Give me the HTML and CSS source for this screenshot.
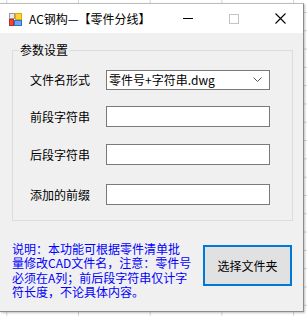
FILE: index.html
```html
<!DOCTYPE html>
<html>
<head>
    <title>AC钢构—【零件分线】</title>
    <meta charset="utf-8" />
    <link rel="stylesheet" href="styles.css">
</head>
<body>
    <div class="window">
        <div class="titlebar">
            <svg class="app-icon" width="13" height="13" viewBox="0 0 13 13">
                <rect x="0" y="0" width="6" height="6" fill="#9a9a9a" />
                <rect x="1" y="1" width="4" height="4" fill="#e9e9e9" />
                <rect x="6" y="0" width="7" height="7" fill="#e0a800" />
                <rect x="7" y="1" width="5" height="5" fill="#ffd23c" />
                <rect x="0" y="6" width="5" height="7" fill="#c8281e" />
                <rect x="1" y="7" width="3" height="5" fill="#e84a3a" />
                <rect x="5" y="7" width="8" height="6" fill="#2f6fc7" />
                <rect x="6" y="8" width="6" height="4" fill="#6aa5f0" />
            </svg>
            <span class="title">AC钢构—【零件分线】</span>
            <div class="caption-buttons">
                <span class="cap cap-min"><i></i></span>
                <span class="cap cap-max"><i></i></span>
                <span class="cap cap-close">
                    <svg width="11" height="11" viewBox="0 0 11 11">
                        <path d="M0.5 0.5 L10.5 10.5 M10.5 0.5 L0.5 10.5" stroke="#000" stroke-width="1.1" fill="none" />
                    </svg>
                </span>
            </div>
        </div>
        <div class="client">
            <fieldset class="group">
                <legend>参数设置</legend>
                <div class="row first">
                    <label>文件名形式</label>
                    <div class="combo">
                        <span>零件号+字符串.dwg</span>
                        <svg width="9" height="6" viewBox="0 0 9 6">
                            <path d="M0.5 0.5 L4.5 4.5 L8.5 0.5" stroke="#555" fill="none" />
                        </svg>
                    </div>
                </div>
                <div class="row">
                    <label>前段字符串</label>
                    <input class="textbox" type="text">
                </div>
                <div class="row third">
                    <label>后段字符串</label>
                    <input class="textbox" type="text">
                </div>
                <div class="row last">
                    <label>添加的前缀</label>
                    <input class="textbox" type="text">
                </div>
            </fieldset>
            <div class="bottom">
                <p class="note">说明：本功能可根据零件清单批<br>量修改CAD文件名，注意：零件号<br>必须在A列；前后段字符串仅计字<br>符长度，不论具体内容。</p>
                <button class="pick">选择文件夹</button>
            </div>
        </div>
    </div>
</body>
</html>
```

FILE: styles.css
```css
body {
    margin: 0;
    font-family: "Noto Sans CJK SC", "Microsoft YaHei", sans-serif;
    font-size: 12px;
    color: #000000;
    background-color: #ffffff;
    background-image:
        linear-gradient(90deg, #d6d6d6 1px, transparent 1px),
        linear-gradient(180deg, #d6d6d6 1px, transparent 1px);
    background-size: 71.7px 100%, 100% 18.3px;
    background-position: 78px 0, 0 12px;
    height: 316px;
    overflow: hidden;
}

.window {
    margin-top: 3px;
    width: 304px;
    height: 309px;
    border-right: 1px solid #8c8c8c;
    border-bottom: 1px solid #8c8c8c;
    border-top: 1px solid #bdbdbd;
    box-sizing: border-box;
    background: #f0f0f0;
    box-shadow: 1px 1px 2px rgba(0, 0, 0, 0.25);
    display: flex;
    flex-direction: column;
}

.titlebar {
    height: 29px;
    background: #ffffff;
    display: flex;
    align-items: center;
    padding-left: 9px;
}

.app-icon {
    flex: none;
    margin-top: 2px;
}

.title {
    margin-left: 7px;
    font-size: 12px;
    line-height: 16px;
}

.caption-buttons {
    margin-left: auto;
    display: flex;
    align-items: center;
}

.cap {
    width: 46px;
    height: 29px;
    display: flex;
    align-items: center;
    justify-content: center;
}

.cap-min i {
    display: block;
    width: 10px;
    height: 1px;
    background: #000000;
}

.cap-max i {
    display: block;
    width: 8px;
    height: 8px;
    border: 1px solid #c4c4c4;
}

.cap-close svg {
    display: block;
}

.client {
    padding: 9px 0 0 12px;
}

.group {
    margin: 0;
    width: 281px;
    box-sizing: border-box;
    border: 1px solid #dcdcdc;
    padding: 0 0 15px 17px;
    display: flex;
    flex-direction: column;
    gap: 16px;
}

.group legend {
    margin-left: -11px;
    padding: 0 1px;
    line-height: 16px;
    font-size: 12px;
}

.row {
    display: flex;
    align-items: center;
}

.row.first {
    margin-top: 12px;
}

.row.third {
    margin-top: 1px;
}

.row.last {
    margin-top: 3px;
}

.row label {
    width: 76px;
    line-height: 16px;
}

.combo {
    width: 164px;
    height: 20px;
    box-sizing: border-box;
    border: 1px solid #7a7a7a;
    background: #ffffff;
    display: flex;
    align-items: center;
    padding: 0 7px 0 2px;
}

.combo span {
    line-height: 16px;
}

.combo svg {
    margin-left: auto;
}

.textbox {
    width: 164px;
    height: 21px;
    box-sizing: border-box;
    border: 1px solid #7a7a7a;
    background: #ffffff;
    margin: 0;
    padding: 0 2px;
    font: inherit;
    outline: none;
}

.bottom {
    display: flex;
    align-items: flex-start;
    margin-top: 21px;
}

.note {
    margin: 0;
    width: 176px;
    flex: none;
    white-space: nowrap;
    color: #0000ff;
    font-size: 12px;
    line-height: 14.4px;
}

.pick {
    margin: 3px 0 0 15px;
    width: 89px;
    height: 41px;
    flex: none;
    box-sizing: border-box;
    border: 2px solid #0078d7;
    background: #e1e1e1;
    font: inherit;
    font-size: 12px;
    color: #000000;
    padding: 0;
}
```
